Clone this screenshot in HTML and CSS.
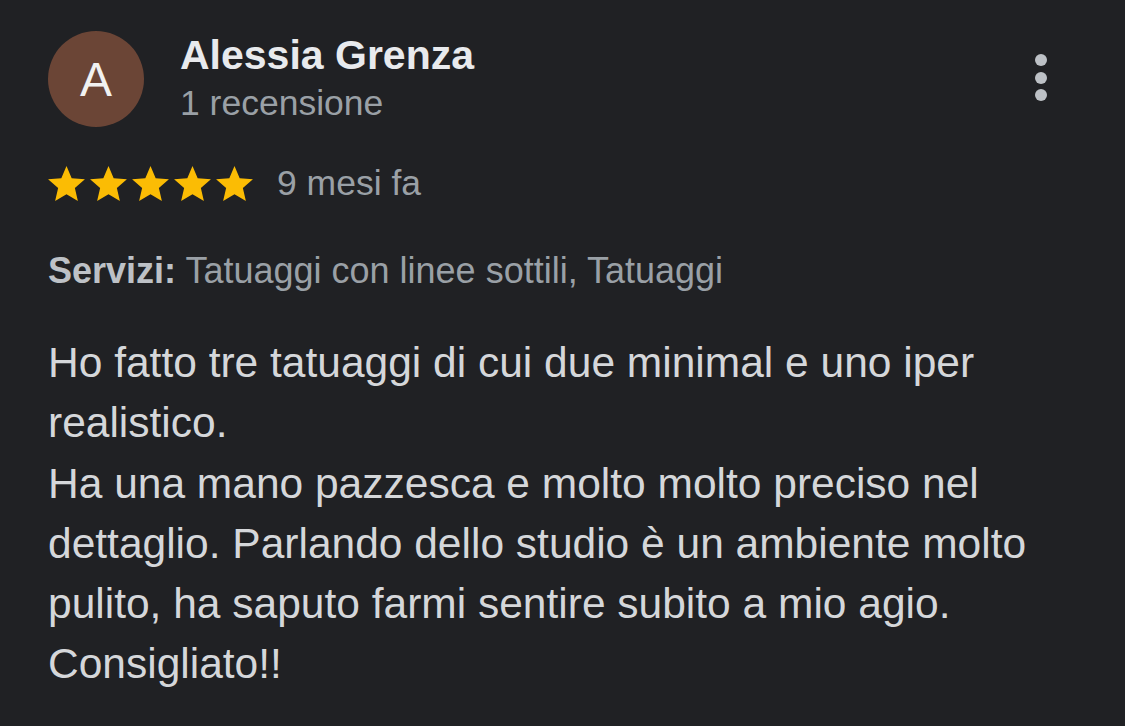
FILE: index.html
```html
<!DOCTYPE html>
<html>
<head>
    <title>Recensione</title>
    <link rel="stylesheet" href="styles.css">
</head>

<body>

  <div class="review">

    <div class="head">
        <div class="avatar">A</div>
        <div class="who">
            <div class="name">Alessia Grenza</div>
            <div class="count">1 recensione</div>
        </div>
        <div class="more">
            <span></span>
            <span></span>
            <span></span>
        </div>
    </div>

    <div class="rating">
        <div class="stars">
            <svg viewBox="2 2 20 19"><path d="M12 17.27L18.18 21l-1.64-7.03L22 9.24l-7.19-.61L12 2 9.19 8.63 2 9.24l5.46 4.73L5.82 21z"/></svg>
            <svg viewBox="2 2 20 19"><path d="M12 17.27L18.18 21l-1.64-7.03L22 9.24l-7.19-.61L12 2 9.19 8.63 2 9.24l5.46 4.73L5.82 21z"/></svg>
            <svg viewBox="2 2 20 19"><path d="M12 17.27L18.18 21l-1.64-7.03L22 9.24l-7.19-.61L12 2 9.19 8.63 2 9.24l5.46 4.73L5.82 21z"/></svg>
            <svg viewBox="2 2 20 19"><path d="M12 17.27L18.18 21l-1.64-7.03L22 9.24l-7.19-.61L12 2 9.19 8.63 2 9.24l5.46 4.73L5.82 21z"/></svg>
            <svg viewBox="2 2 20 19"><path d="M12 17.27L18.18 21l-1.64-7.03L22 9.24l-7.19-.61L12 2 9.19 8.63 2 9.24l5.46 4.73L5.82 21z"/></svg>
        </div>
        <span class="when">9 mesi fa</span>
    </div>

    <p class="services"><b>Servizi:</b> Tatuaggi con linee sottili, Tatuaggi</p>

    <p class="text">
        Ho fatto tre tatuaggi di cui due minimal e uno iper realistico.<br>
        Ha una mano pazzesca e molto molto preciso nel dettaglio. Parlando dello studio è un ambiente molto pulito, ha saputo farmi sentire subito a mio agio.<br>
        Consigliato!!
    </p>

  </div>

</body>

</html>
```

FILE: styles.css
```css
body {
  margin: 0;
  background: #202124;
  color: #d5d7da;
  font-family: 'Liberation Sans', Arial, sans-serif;
}

.review {
  padding: 31px 40px 0 48px;
}

.head {
  display: flex;
  align-items: flex-start;
}

.avatar {
  width: 96px;
  height: 96px;
  border-radius: 50%;
  background: #6b4536;
  color: #f1f1f1;
  font-size: 48px;
  display: flex;
  align-items: center;
  justify-content: center;
  flex-shrink: 0;
}

.who {
  flex: 1;
  margin-left: 36px;
}

.name {
  font-size: 41px;
  font-weight: bold;
  line-height: 48px;
  color: #e8eaed;
}

.count {
  font-size: 35.5px;
  line-height: 48px;
  color: #9aa0a6;
}

.more {
  display: flex;
  flex-direction: column;
  gap: 5.5px;
  margin: 23px 38px 0 0;
}
.more span {
  width: 12px;
  height: 12px;
  border-radius: 50%;
  background: #bdc1c6;
}

.rating {
  display: flex;
  align-items: center;
  height: 40px;
  margin-top: 36px;
}

.stars {
  display: flex;
  gap: 5px;
}
.stars svg {
  width: 37px;
  height: 35px;
  fill: #fbbc04;
}

.when {
  font-size: 35.5px;
  color: #9aa0a6;
  margin-left: 24px;
}

.services {
  margin: 46px 0 0 0;
  font-size: 36px;
  line-height: 44px;
  color: #9aa0a6;
}
.services b {
  color: #bdc1c6;
}

.text {
  margin: 40px 0 0 0;
  font-size: 42.5px;
  line-height: 60.3px;
  color: #d5d7da;
}
```
